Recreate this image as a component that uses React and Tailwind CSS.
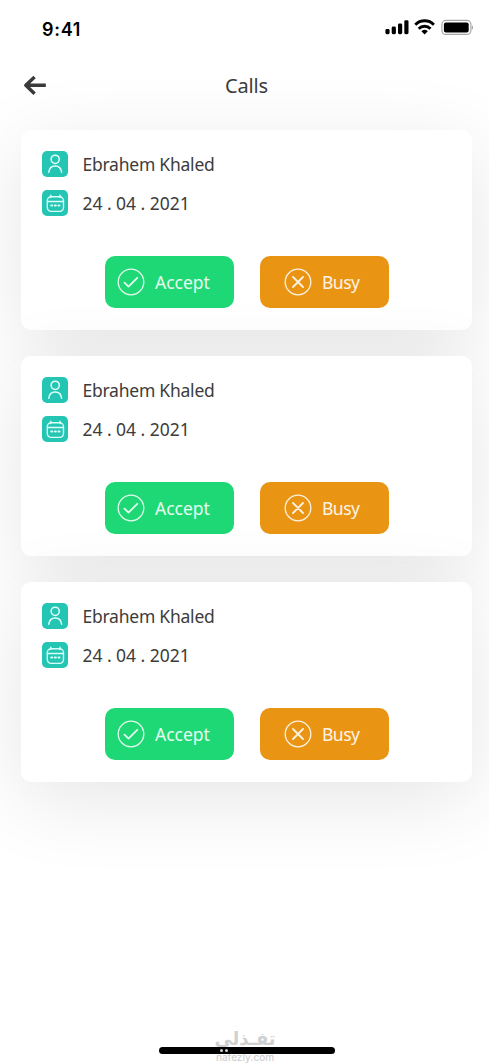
import React from 'react';

const calls = [
    { id: 1, name: 'Ebrahem Khaled', date: '24 . 04 . 2021' },
    { id: 2, name: 'Ebrahem Khaled', date: '24 . 04 . 2021' },
    { id: 3, name: 'Ebrahem Khaled', date: '24 . 04 . 2021' },
];

function StatusBar() {
    return (
        <div className="flex h-[54px] items-start justify-between pt-[17px] pl-[42px] pr-4">
            <span className="font-['Inter',sans-serif] text-[18px] leading-[26px] font-semibold tracking-[0.7px] text-black">9:41</span>
            <svg width="90" height="20" viewBox="0 0 90 20" fill="none">
                <g fill="#000">
                    <rect x="2.4" y="12" width="4.2" height="5.2" rx="1.4" />
                    <rect x="8.7" y="9.5" width="4.2" height="7.7" rx="1.4" />
                    <rect x="15" y="6.5" width="4.2" height="10.7" rx="1.4" />
                    <rect x="21.3" y="3.2" width="4.2" height="14" rx="1.4" />
                </g>
                <g stroke="#000" strokeWidth="2.9">
                    <path d="M32.3 7.7a13 13 0 0 1 18.6 0" />
                    <path d="M35.7 11.7a8.2 8.2 0 0 1 11.8 0" />
                </g>
                <path d="M38.4 14.2a4.8 4.8 0 0 1 6.4 0L41.6 17.4Z" fill="#000" />
                <rect x="58.9" y="3.4" width="29" height="14" rx="4" stroke="#a6a6a6" strokeWidth="1.2" />
                <rect x="60.9" y="5.5" width="24.8" height="10" rx="2" fill="#000" />
                <path d="M88.9 8.2c1.7.6 1.7 3.8 0 4.4Z" fill="#a6a6a6" />
            </svg>
        </div>
    );
}

function Header() {
    return (
        <header className="grid h-[75.5px] grid-cols-[60px_1fr_56px] items-start pt-[17px]">
            <button className="flex h-[30px] items-center pl-[23px]" aria-label="Back">
                <svg width="24" height="22" viewBox="0 0 24 22" fill="none" stroke="#3a3a3c" strokeWidth="3.4">
                    <path d="M22.8 10.3H2.8M11.6 2 2.8 10.3l8.8 8.5" strokeLinejoin="round" />
                </svg>
            </button>
            <h1 className="text-center text-[20px] leading-[29px] tracking-[-0.2px] text-[#3c3c3c]">Calls</h1>
        </header>
    );
}

function UserIcon() {
    return (
        <svg width="26" height="26" viewBox="0 0 26 26" fill="none" stroke="#e4fffb" strokeWidth="1.5" strokeLinecap="round" className="rounded-[5px] bg-[#24c6b3]">
            <circle cx="13.2" cy="8.3" r="4.1" />
            <path d="M6.8 21.2c.4-4.2 2.8-6.3 6.4-6.3s6 2.1 6.4 6.3" />
        </svg>
    );
}

function CalendarIcon() {
    return (
        <svg width="26" height="26" viewBox="0 0 26 26" fill="none" stroke="#d8fff9" strokeWidth="1.4" strokeLinecap="round" className="rounded-[5px] bg-[#24c6b3]">
            <rect x="5.3" y="6.8" width="16.2" height="14.6" rx="3.8" />
            <path d="M5.5 11.5h15.8M8.8 5.2V7.6M18 5.2V7.6" />
            <path d="M9.2 15.5h1.1M12.8 15.5h1.1M16.4 15.5h1.1" strokeWidth="1.9" />
        </svg>
    );
}

function ActionIcon({ children }) {
    return (
        <svg width="28" height="28" viewBox="0 0 28 28" fill="none" stroke="#fff" strokeOpacity=".88" strokeLinecap="round" strokeLinejoin="round">
            <circle cx="14" cy="14" r="12.8" strokeWidth="1.3" />
            {children}
        </svg>
    );
}

function CallCard({ name, date }) {
    return (
        <article className="h-[200px] rounded-[10px] bg-white pt-[21.5px] pl-[21.5px] shadow-[0_18px_80px_rgba(0,0,0,0.1)]">
            <div className="flex h-[26px] items-center gap-[14.4px]">
                <UserIcon />
                <span className="text-[17.5px] tracking-[-0.23px] text-[#3c3c3c]">{name}</span>
            </div>
            <div className="mt-[13px] flex h-[26px] items-center gap-[14.4px]">
                <CalendarIcon />
                <span className="text-[17.5px] tracking-[-0.02px] text-[#3c3c3c]">{date}</span>
            </div>
            <div className="mt-[39.5px] flex gap-[26px] pl-[63px]">
                <button className="flex h-[52.5px] w-[129px] items-center gap-[10px] rounded-[10px] bg-[#1dd874] pl-3 text-[17.5px] text-white/90">
                    <ActionIcon>
                        <path d="m7.5 14.6 4 4 8.8-8.8" strokeWidth="1.8" />
                    </ActionIcon>
                    Accept
                </button>
                <button className="flex h-[52.5px] w-[129px] items-center gap-[10px] rounded-[10px] bg-[#e99412] pl-6 text-[17.5px] tracking-[-0.5px] text-white/90">
                    <ActionIcon>
                        <path d="m9 9 10 10M19 9 9 19" strokeWidth="1.8" />
                    </ActionIcon>
                    Busy
                </button>
            </div>
        </article>
    );
}

function HomeIndicator() {
    return (
        <footer className="relative mt-auto flex h-4 justify-center">
            <div className="absolute top-[-22px] left-[205px] w-[80px] text-center font-['DejaVu_Sans',sans-serif] text-[#d0d0d0]">
                <div dir="rtl" className="text-[18px] leading-[28px] font-bold">تفـذلي</div>
                <div className="-mt-[2px] font-['Inter',sans-serif] text-[10px] leading-[12px] font-medium">nafezly.com</div>
            </div>
            <div className="relative ml-1 flex h-[7px] w-[176px] items-center gap-[2px] rounded-full bg-black pl-[61px]">
                <span className="size-[3px] rounded-full bg-[#d0d0d0]" />
                <span className="size-[3px] rounded-full bg-[#d0d0d0]" />
            </div>
        </footer>
    );
}

export default function App() {
    return (
        <div className="flex h-[1063px] w-[489px] flex-col overflow-hidden bg-white font-['Noto_Sans',sans-serif]">
            <StatusBar />
            <Header />
            <main className="flex flex-col gap-[26px] pr-[17.5px] pl-[20.5px]">
                {calls.map((call) => (
                    <CallCard key={call.id} name={call.name} date={call.date} />
                ))}
            </main>
            <HomeIndicator />
        </div>
    );
}
